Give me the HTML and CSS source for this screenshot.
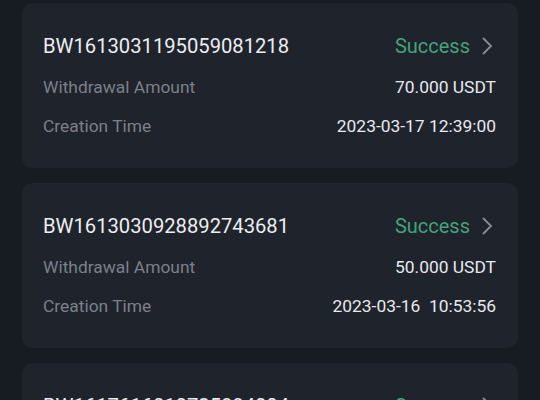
FILE: index.html
```html
<!DOCTYPE html>
<html lang="en">
<head>
  <meta charset="UTF-8">
  <meta name="viewport" content="width=device-width, initial-scale=1.0">
  <title>Withdrawal Records</title>
  <link rel="stylesheet" href="styles.css">
</head>
<body>
  <div class="records">
    <div class="record">
      <div class="record-head">
        <span class="order-no">BW1613031195059081218</span>
        <span class="status">Success
          <svg class="chevron" width="12" height="20" viewBox="0 0 12 20"><path d="M2 2l8 8-8 8" fill="none" stroke="currentColor" stroke-width="1.8"/></svg>
        </span>
      </div>
      <div class="row"><span class="label">Withdrawal Amount</span><span class="value">70.000 USDT</span></div>
      <div class="row"><span class="label">Creation Time</span><span class="value">2023-03-17 12:39:00</span></div>
    </div>

    <div class="record">
      <div class="record-head">
        <span class="order-no">BW1613030928892743681</span>
        <span class="status">Success
          <svg class="chevron" width="12" height="20" viewBox="0 0 12 20"><path d="M2 2l8 8-8 8" fill="none" stroke="currentColor" stroke-width="1.8"/></svg>
        </span>
      </div>
      <div class="row"><span class="label">Withdrawal Amount</span><span class="value">50.000 USDT</span></div>
      <div class="row"><span class="label">Creation Time</span><span class="value">2023-03-16&nbsp; 10:53:56</span></div>
    </div>

    <div class="record">
      <div class="record-head">
        <span class="order-no">BW1617616010725884004</span>
        <span class="status">Success
          <svg class="chevron" width="12" height="20" viewBox="0 0 12 20"><path d="M2 2l8 8-8 8" fill="none" stroke="currentColor" stroke-width="1.8"/></svg>
        </span>
      </div>
      <div class="row"><span class="label">Withdrawal Amount</span><span class="value">30.000 USDT</span></div>
      <div class="row"><span class="label">Creation Time</span><span class="value">2023-03-15 09:12:40</span></div>
    </div>
  </div>
</body>
</html>
```

FILE: styles.css
```css
body {
  margin: 0;
  background-color: #171b22;
  font-family: Roboto, "Liberation Sans", sans-serif;
  color: #e6e8eb;
  overflow: hidden;
}
.records {
  padding: 3px 22px 0;
  display: flex;
  flex-direction: column;
  gap: 15px;
}
.record {
  background-color: #1f232c;
  border-radius: 10px;
  padding: 28px 22px 30px 21px;
  height: 165px;
  box-sizing: border-box;
}
.record-head {
  display: flex;
  justify-content: space-between;
  align-items: center;
  height: 30px;
  margin-bottom: 14px;
}
.order-no {
  font-size: 20.2px;
  color: #eceef1;
}
.status {
  display: flex;
  align-items: center;
  gap: 11px;
  font-size: 20px;
  color: #45a27a;
  margin-right: 3px;
}
.chevron {
  color: #878c95;
}
.row {
  display: flex;
  justify-content: space-between;
  align-items: center;
  height: 24px;
  margin-bottom: 15px;
}
.label {
  font-size: 17.4px;
  color: #7b808a;
}
.value {
  font-size: 17.4px;
  color: #e8eaed;
}
```
